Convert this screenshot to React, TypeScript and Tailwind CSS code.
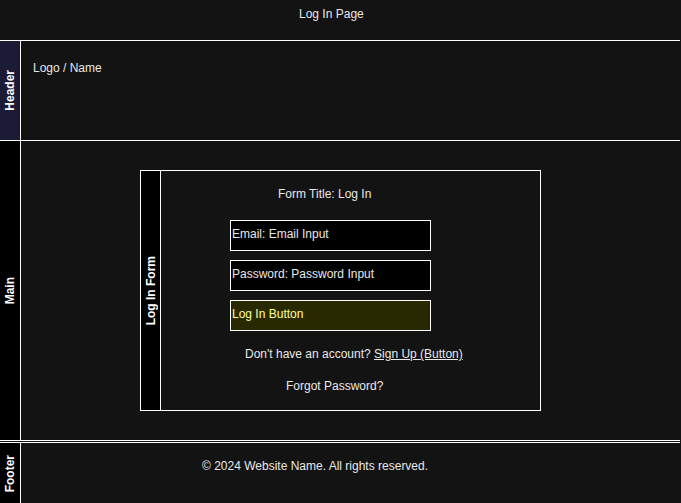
import React from 'react'

function SideLabel({ text, className }: { text: string; className: string }) {
  return (
    <div className={`shrink-0 border-r border-white flex items-center justify-center ${className}`}>
      <span className="[writing-mode:vertical-rl] rotate-180 font-bold text-white text-[12px] leading-[14px]">
        {text}
      </span>
    </div>
  )
}

export default function App() {
  return (
    <div className="w-[681px] h-[503px] overflow-hidden bg-[#131313] text-[#e8e8e8] text-[12px] leading-[14px] font-['Liberation_Sans',Arial,sans-serif]">
      {/* Page title */}
      <div className="h-[40px] pt-[7px] pl-[299px]">Log In Page</div>

      {/* Header */}
      <section className="w-[680px] h-[101px] flex border-y border-white">
        <SideLabel text="Header" className="w-[21px] bg-[#1b1b36]" />
        <div className="pl-[12px] pt-[20px]">Logo / Name</div>
      </section>

      {/* Main */}
      <section className="w-[680px] h-[300px] flex border-b border-white">
        <SideLabel text="Main" className="w-[21px] bg-black" />
        <div className="pl-[119px] pt-[29px]">
          <div className="w-[401px] h-[241px] flex border border-white">
            <SideLabel text="Log In Form" className="w-[20px] bg-black" />
            <div className="flex flex-col items-start">
              <div className="pt-[16px] pl-[117px]">Form Title: Log In</div>
              <div className="flex flex-col gap-[9px] pt-[19px] pl-[69px]">
                <div className="w-[201px] h-[31px] pt-[6px] pl-px text-left bg-black border border-white">
                  Email: Email Input
                </div>
                <div className="w-[201px] h-[31px] pt-[6px] pl-px text-left bg-black border border-white">
                  Password: Password Input
                </div>
                <button className="w-[201px] h-[31px] pt-[6px] pl-px text-left flex items-start bg-[#292900] border border-white text-[#ffff99]">
                  Log In Button
                </button>
              </div>
              <div className="pt-[16px] pl-[84px]">
                Don't have an account? <span className="underline">Sign Up (Button)</span>
              </div>
              <div className="pt-[18px] pl-[125px]">Forgot Password?</div>
            </div>
          </div>
        </div>
      </section>

      {/* Footer */}
      <section className="w-[680px] h-[62px] mt-px flex border-t border-white">
        <SideLabel text="Footer" className="w-[21px] bg-black" />
        <div className="pl-[181px] pt-[16px]">© 2024 Website Name. All rights reserved.</div>
      </section>
    </div>
  )
}
